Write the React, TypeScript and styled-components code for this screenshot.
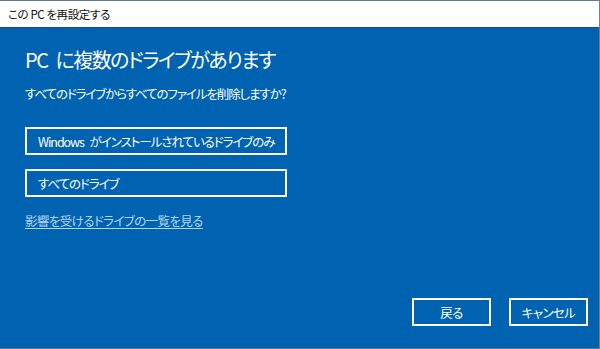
import React from "react";
import styled, { createGlobalStyle } from "styled-components";

const Global = createGlobalStyle`
  html, body { margin: 0; padding: 0; background: #ffffff; }
  body { font-family: "Noto Sans CJK JP", "Noto Sans", sans-serif; }
  * { box-sizing: border-box; }
`;

const Window = styled.div`
  width: 600px;
  height: 349px;
  display: flex;
  flex-direction: column;
  border-top: 1px solid #5f7c93;
  border-right: 1px solid #6a8296;
  border-bottom: 1px solid #4a7aa6;
  background: #0063b1;
  font-feature-settings: "palt";
`;

const TitleBar = styled.div`
  height: 27px;
  flex: none;
  display: flex;
  align-items: center;
  padding-left: 8px;
  background: #ffffff;
  color: #111111;
  font-size: 11.5px;
  letter-spacing: -0.4px;
  border-bottom: 1px solid #1a4f86;
`;

const Body = styled.div`
  flex: 1;
  display: flex;
  flex-direction: column;
  padding: 12px 11px 22px 25px;
  color: #ffffff;
`;

const Heading = styled.h1`
  margin: 0;
  font-size: 20px;
  font-weight: 400;
  line-height: 40px;
  letter-spacing: -1.5px;
  word-spacing: 5px;
  white-space: nowrap;
`;

const Question = styled.p`
  margin: 4px 0 0;
  font-size: 12.5px;
  line-height: 20px;
  letter-spacing: -1.1px;
  white-space: nowrap;
`;

const Choices = styled.div`
  display: flex;
  flex-direction: column;
  gap: 14px;
  margin-top: 23px;
`;

const ChoiceButton = styled.button`
  width: 262px;
  height: 28px;
  display: flex;
  align-items: center;
  padding: 0 11px;
  background: transparent;
  border: 2px solid #ffffff;
  color: #ffffff;
  font-family: inherit;
  font-feature-settings: "palt";
  font-size: 12.5px;
  letter-spacing: -1.05px;
  word-spacing: 4px;
  white-space: nowrap;
  text-align: left;
`;

const LinkText = styled.a`
  margin-top: 14px;
  align-self: flex-start;
  font-size: 12.5px;
  line-height: 20px;
  letter-spacing: -0.6px;
  color: #b5d6f2;
  text-decoration: underline;
  text-underline-offset: 2px;
  white-space: nowrap;
`;

const Footer = styled.div`
  margin-top: auto;
  display: flex;
  justify-content: flex-end;
  gap: 18px;
`;

const FooterButton = styled.button`
  width: 79px;
  height: 28px;
  background: transparent;
  border: 2px solid #ffffff;
  color: #ffffff;
  font-family: inherit;
  font-feature-settings: "palt";
  font-size: 12.5px;
  letter-spacing: -0.6px;
  padding: 0;
`;

export default function App() {
  return (
    <>
      <Global />
      <Window>
        <TitleBar>この PC を再設定する</TitleBar>
        <Body>
          <Heading>PC に複数のドライブがあります</Heading>
          <Question>すべてのドライブからすべてのファイルを削除しますか?</Question>
          <Choices>
            <ChoiceButton>Windows がインストールされているドライブのみ</ChoiceButton>
            <ChoiceButton>すべてのドライブ</ChoiceButton>
          </Choices>
          <LinkText>影響を受けるドライブの一覧を見る</LinkText>
          <Footer>
            <FooterButton>戻る</FooterButton>
            <FooterButton>キャンセル</FooterButton>
          </Footer>
        </Body>
      </Window>
    </>
  );
}
